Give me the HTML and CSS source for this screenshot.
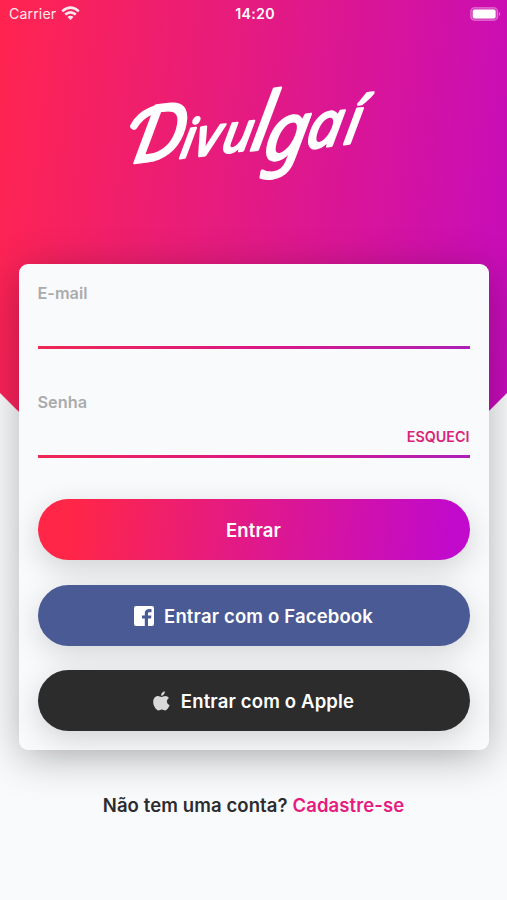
FILE: index.html
```html
<!DOCTYPE html>
<html lang="pt-BR">
<head>
<meta charset="utf-8">
<title>Divulgaí</title>
<link rel="stylesheet" href="styles.css">
</head>
<body>
<main class="screen">
  <header class="status">
    <div class="carrier"><span>Carrier</span>
      <svg width="19" height="15" viewBox="0 0 19 15" fill="none" stroke="#fff" stroke-width="2.6"><path d="M1.2 5.4Q9.5-2 17.8 5.4M4.2 8.6Q9.5 4 14.8 8.6"/><path d="M6.5 11Q9.5 8.6 12.5 11L9.5 14Z" fill="#fff" stroke="none"/></svg>
    </div>
    <span class="clock">14:20</span>
    <svg class="battery" width="31" height="14" viewBox="0 0 31 14"><rect x=".7" y=".7" width="27" height="12.6" rx="3.8" fill="#fff" fill-opacity=".2" stroke="#fff" stroke-opacity=".3" stroke-width="1.2"/><rect x="2.8" y="2.6" width="22.8" height="8.8" rx="2" fill="#fff"/><path d="M29 5Q31 7 29 9Z" fill="#fff" fill-opacity=".5"/></svg>
  </header>
  <svg class="logo" width="270" height="120" viewBox="0 0 270 120" role="img" aria-label="Divulgaí">
    <path class="swash" d="M15 51C23 37 39 31 54 33"/>
    <text class="wordmark" transform="translate(14 90) rotate(-7) skewX(-17)"><tspan class="cap" x="-2" y="-2">D</tspan><tspan x="46 61 88" y="-1 -1 -1">ivu</tspan><tspan class="tall" x="117" y="0">l</tspan><tspan class="tail" x="132" y="12">g</tspan><tspan class="wide" x="174 212" y="5 5">aí</tspan></text>
  </svg>
  <form class="card">
    <label class="field"><span class="label">E-mail</span></label>
    <label class="field second"><span class="label">Senha</span><a class="forgot">ESQUECI</a></label>
    <button type="button" class="btn primary"><span>Entrar</span></button>
    <button type="button" class="btn facebook">
      <svg width="20" height="20" viewBox="0 0 20 20"><path fill="#fff" d="M2 0H18Q20 0 20 2V18Q20 20 18 20H14V12.6H17L17.4 9.5H14V7.6C14 6.6 14.5 6.2 15.5 6.2H17.5V3.3C14 2.7 10.8 3.5 10.8 7.1V9.5H8V12.6H10.8V20H2Q0 20 0 18V2Q0 0 2 0Z"/></svg>
      <span>Entrar com o Facebook</span>
    </button>
    <button type="button" class="btn apple">
      <svg width="17" height="20" viewBox="0 0 17 20"><path fill="#d9d9d9" d="M11.8.2C12 2.6 10.2 4.7 8.1 4.7 7.9 2.4 9.8.5 11.8.2ZM8.5 5.9C9.6 5.9 10.7 4.9 12.3 4.9 13.8 4.9 15.2 5.7 16 6.9 12.9 8.7 13.4 12.7 16.6 14.1 15.8 16.4 14.1 19.4 12.2 19.4 10.9 19.4 10.4 18.6 8.9 18.6 7.3 18.6 6.8 19.4 5.5 19.4 3.1 19.4.2 14.8.2 11 .2 7.3 2.4 5 4.9 5 6.4 5 7.5 5.9 8.5 5.9Z"/></svg>
      <span>Entrar com o Apple</span>
    </button>
  </form>
  <p class="signup">Não tem uma conta? <a>Cadastre-se</a></p>
</main>
</body>
</html>
```
FILE: styles.css
```css
* { box-sizing: border-box; }
body { margin: 0; font-family: Inter, "Liberation Sans", sans-serif; }
.screen {
  height: 900px;
  display: flex;
  flex-direction: column;
  align-items: center;
  overflow: hidden;
  position: relative;
  z-index: 0;
  background: #f9fafc;
}
.screen::before {
  content: "";
  position: absolute;
  z-index: -1;
  inset: 0 0 auto;
  height: 646px;
  background: linear-gradient(97deg, #ff2450 1%, #e51b80 43%, #c40bc0 98%);
  clip-path: polygon(0 0, 100% 0, 100% 393px, 50% 100%, 0 393px);
}
.status {
  width: 100%;
  height: 27px;
  padding: 0 6px 0 9px;
  display: grid;
  grid-template-columns: 1fr auto 1fr;
  align-items: center;
  color: #fff;
  font-size: 14.2px;
}
.carrier { display: flex; align-items: center; gap: 5px; opacity: .9; letter-spacing: .1px; }
.clock { font-weight: 600; letter-spacing: .3px; }
.battery { justify-self: end; }
.logo { margin-top: 48px; overflow: visible; }
.swash { fill: none; stroke: #fff; stroke-width: 7.5px; stroke-linecap: round; }
.wordmark {
  font-family: "Noto Sans", sans-serif;
  font-style: italic;
  font-weight: 400;
  font-size: 52px;
  fill: #fff;
  stroke: #fff;
  stroke-width: 2.6px;
  stroke-linejoin: round;
}
.wordmark .cap { font-size: 76px; }
.wordmark .tall { font-size: 77px; }
.wordmark .tail { font-size: 76px; }
.wordmark .wide { font-size: 62px; }
.card {
  width: 470px;
  height: 486.5px;
  margin-top: 68.5px;
  padding: 18.5px 19px 0;
  border-radius: 9px;
  background: #f9fafc;
  box-shadow: 0 8px 42px rgba(0, 0, 0, .28);
}
.field {
  display: flex;
  justify-content: space-between;
  height: 67px;
  border-bottom: 3px solid;
  border-image: linear-gradient(90deg, #ef2854, #dc1884 50%, #ad20b8) 1;
}
.field.second { margin-top: 42px; }
.label { color: #aaabad; font-size: 16.3px; font-weight: 600; line-height: 23px; }
.forgot { align-self: flex-end; color: #da2478; font-size: 14.3px; font-weight: 600; line-height: 20px; margin-bottom: 8px; }
.btn {
  width: 432px;
  height: 61px;
  margin: 0 0 24.5px;
  padding: 1px 0 0;
  display: flex;
  align-items: center;
  justify-content: center;
  border: 0;
  border-radius: 31px;
  box-shadow: 0 8px 42px rgba(0, 0, 0, .2);
  color: #fff;
  font: 600 18.5px Inter, sans-serif;
  letter-spacing: .16px;
}
.btn { position: relative; }
.primary { z-index: 3; margin-top: 41px; background: linear-gradient(97deg, #ff2647 8%, #e51b80 43%, #c10acb 95%); box-shadow: none; }
.facebook { z-index: 2; background: #495a94; gap: 10px; box-shadow: none; }
.apple { z-index: 1; background: #2c2c2c; gap: 11px; box-shadow: 0 8px 30px rgba(0, 0, 0, .16), 0 -77px 30px rgba(0, 0, 0, .15), 0 -162px 30px rgba(0, 0, 0, .16); }
.signup { margin: 43px 0 0; color: #2c2c2e; font-size: 18.5px; font-weight: 600; line-height: 24px; letter-spacing: .1px; white-space: nowrap; }
.signup a { color: #e51c7e; }
```
